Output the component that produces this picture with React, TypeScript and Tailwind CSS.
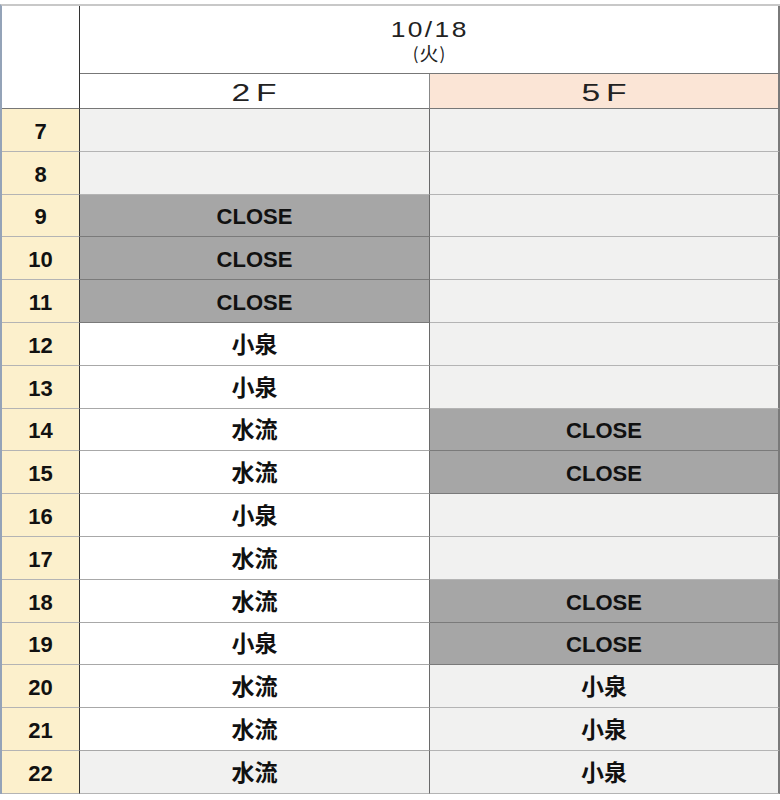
import React from "react";

type Cell = { t: string; k: "g" | "w" | "c" };
const rows: { h: number; a: Cell; b: Cell }[] = [
  { h: 7, a: { t: "", k: "g" }, b: { t: "", k: "g" } },
  { h: 8, a: { t: "", k: "g" }, b: { t: "", k: "g" } },
  { h: 9, a: { t: "CLOSE", k: "c" }, b: { t: "", k: "g" } },
  { h: 10, a: { t: "CLOSE", k: "c" }, b: { t: "", k: "g" } },
  { h: 11, a: { t: "CLOSE", k: "c" }, b: { t: "", k: "g" } },
  { h: 12, a: { t: "小泉", k: "w" }, b: { t: "", k: "g" } },
  { h: 13, a: { t: "小泉", k: "w" }, b: { t: "", k: "g" } },
  { h: 14, a: { t: "水流", k: "w" }, b: { t: "CLOSE", k: "c" } },
  { h: 15, a: { t: "水流", k: "w" }, b: { t: "CLOSE", k: "c" } },
  { h: 16, a: { t: "小泉", k: "w" }, b: { t: "", k: "g" } },
  { h: 17, a: { t: "水流", k: "w" }, b: { t: "", k: "g" } },
  { h: 18, a: { t: "水流", k: "w" }, b: { t: "CLOSE", k: "c" } },
  { h: 19, a: { t: "小泉", k: "w" }, b: { t: "CLOSE", k: "c" } },
  { h: 20, a: { t: "水流", k: "w" }, b: { t: "小泉", k: "g" } },
  { h: 21, a: { t: "水流", k: "w" }, b: { t: "小泉", k: "g" } },
  { h: 22, a: { t: "水流", k: "g" }, b: { t: "小泉", k: "g" } },
];

const font = { fontFamily: '"Liberation Sans", "Noto Sans CJK JP", sans-serif' };

function DataCell({ c, right }: { c: Cell; right?: boolean }) {
  const bg =
    c.k === "c" ? "bg-[#a6a6a6] border-b-[#7a7a7a]" : c.k === "g" ? "bg-[#f1f1f0] border-b-[#b4b4b4]" : "bg-white border-b-[#a8a8a8]";
  const isClose = c.t === "CLOSE";
  return (
    <div
      className={`flex items-center justify-center border-b ${bg} ${
        right ? "border-r-2 border-r-[#7a7a7a]" : "border-r border-r-[#6a6a6a]"
      } ${isClose ? "text-[22px] pt-[4px]" : "text-[23px] pt-[3px]"} font-bold text-[#111] leading-none`}
    >
      {c.t}
    </div>
  );
}

export default function App() {
  return (
    <div className="w-[780px] h-[800px] bg-white pt-[4px]" style={font}>
      <div className="w-[780px] border-t-2 border-t-[#c8c8c8] border-l-2 border-l-[#94a3b8]">
        <div className="grid grid-cols-[78px_350px_350px] grid-rows-[68px_35px]">
          <div className="row-span-2 border-r border-r-[#333] border-b border-b-[#777] bg-white" />
          <div className="col-span-2 flex flex-col items-center justify-start pt-[13px] border-b border-b-[#777] border-r-2 border-r-[#7a7a7a] bg-white text-[#222]">
            <div className="text-[22px] leading-[22px] font-normal tracking-[2px] scale-x-[1.2] pl-[2px]">10/18</div>
            <div
              className="flex items-center text-[19px] leading-[22px] font-normal mt-[1px] text-[#222]"
              style={{ fontFamily: '"Noto Sans CJK JP", sans-serif' }}
            >
              <span className="text-[17px]">(</span>
              <span className="mx-[1px]">火</span>
              <span className="text-[17px]">)</span>
            </div>
          </div>
          <div className="flex items-center justify-center border-b border-b-[#777] border-r border-r-[#888] bg-white text-[24px] text-[#222] font-normal leading-none pt-[3px]">
            <span className="inline-block scale-x-[1.4] tracking-[4px] pl-[4px]">2F</span>
          </div>
          <div className="flex items-center justify-center border-b border-b-[#777] border-r-2 border-r-[#7a7a7a] bg-[#fbe5d6] text-[24px] text-[#222] font-normal leading-none pt-[3px]">
            <span className="inline-block scale-x-[1.4] tracking-[4px] pl-[4px]">5F</span>
          </div>
        </div>
        <div className="grid grid-cols-[78px_350px_350px] auto-rows-[42.8px]">
          {rows.map((r) => (
            <React.Fragment key={r.h}>
              <div className="flex items-center justify-center bg-[#fcf0cc] border-b border-b-[#b4b4b4] border-r border-r-[#333] text-[22px] font-bold text-[#111] leading-none pt-[4px]">
                {r.h}
              </div>
              <DataCell c={r.a} />
              <DataCell c={r.b} right />
            </React.Fragment>
          ))}
        </div>
      </div>
    </div>
  );
}
